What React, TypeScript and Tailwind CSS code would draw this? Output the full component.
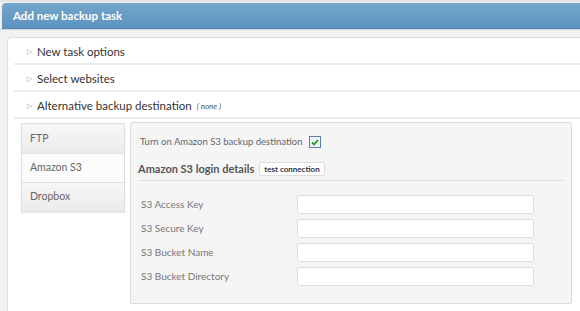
import React from 'react';

const rows = ['New task options', 'Select websites', 'Alternative backup destination'];
const tabs = ['FTP', 'Amazon S3', 'Dropbox'];
const fields = ['S3 Access Key', 'S3 Secure Key', 'S3 Bucket Name', 'S3 Bucket Directory'];

function App() {
  return (
    <div className="w-[580px] h-[311px] overflow-hidden bg-[#f1f1f1] font-['Lato',sans-serif] border-t-2 border-[#e4e4e4]">
      <div className="mt-px ml-[2px] h-[26px] rounded-tl-[4px] border-b border-[#4f86b3] bg-gradient-to-b from-[#74a6cb] to-[#5c93c0] pl-[11px] flex items-center">
        <span className="text-[11.5px] font-bold text-white">Add new backup task</span>
      </div>
      <div className="h-[8px] border-t border-[#d6d6d6]" />

      <div className="ml-[7px] h-[280px] bg-white border-l border-t border-[#dddddd] rounded-tl-[4px] pl-[6px]">
        {rows.map((r, i) => (
          <div key={r} className="h-[27px] pt-[2px] border-b-2 border-[#ececec] flex items-center pl-[13px] text-[11.5px] text-[#333]">
            <span className="text-[7px] text-[#999] mr-[5px]">▷</span>
            <span>{r}</span>
            {i === 2 && <span className="ml-[5px] text-[8px] italic text-[#555]">( none )</span>}
          </div>
        ))}

        <div className="flex items-start mt-[3px] pl-[7px]">
          <div className="w-[104px] mt-px border border-[#dedede] shadow-[0_1px_1px_rgba(0,0,0,0.08)]">
            {tabs.map((t, i) => (
              <div
                key={t}
                className={`h-[29px] flex items-center pl-[8px] text-[10.5px] text-[#666] ${i > 0 ? 'border-t border-[#e2e2e2]' : ''} ${
                  i === 1 ? 'bg-[#fbfbfb]' : 'bg-gradient-to-b from-[#f7f7f7] to-[#ebebeb]'
                }`}
              >
                {t}
              </div>
            ))}
          </div>

          <div className="ml-[5px] w-[442px] h-[182px] border border-[#dcdcdc] rounded-[2px] bg-[#f5f5f5] pl-[7px] pr-[7px]">
            <div className="flex items-center h-[36px] pl-[2px] pt-[2px] text-[9.5px] text-[#666]">
              <span>Turn on Amazon S3 backup destination</span>
              <span className="ml-[6px] w-[12px] h-[12px] border border-[#5b7fa6] bg-[#eef3f8] flex items-center justify-center">
                <svg width="8" height="7" viewBox="0 0 8 7">
                  <path d="M1 3.5 L3 5.5 L7 1" stroke="#1aa31a" strokeWidth="1.8" fill="none" />
                </svg>
              </span>
            </div>
            <div className="flex items-center h-[22px] border-b border-[#e0e0e0] pb-[1px]">
              <span className="text-[11px] font-bold text-[#555]">Amazon S3 login details</span>
              <span className="ml-[5px] h-[14px] px-[4px] border border-[#dddddd] rounded-[2px] bg-white text-[8px] font-bold text-[#333] flex items-center">
                test connection
              </span>
            </div>
            <div className="pt-[14px] flex flex-col gap-[5px]">
              {fields.map((f) => (
                <div key={f} className="flex items-center h-[19px]">
                  <span className="w-[159px] pl-[3px] text-[10px] text-[#777]">{f}</span>
                  <div className="w-[237px] h-[19px] bg-white border border-[#dedede] rounded-[2px]" />
                </div>
              ))}
            </div>
          </div>
        </div>
      </div>
    </div>
  );
}

export default App;
